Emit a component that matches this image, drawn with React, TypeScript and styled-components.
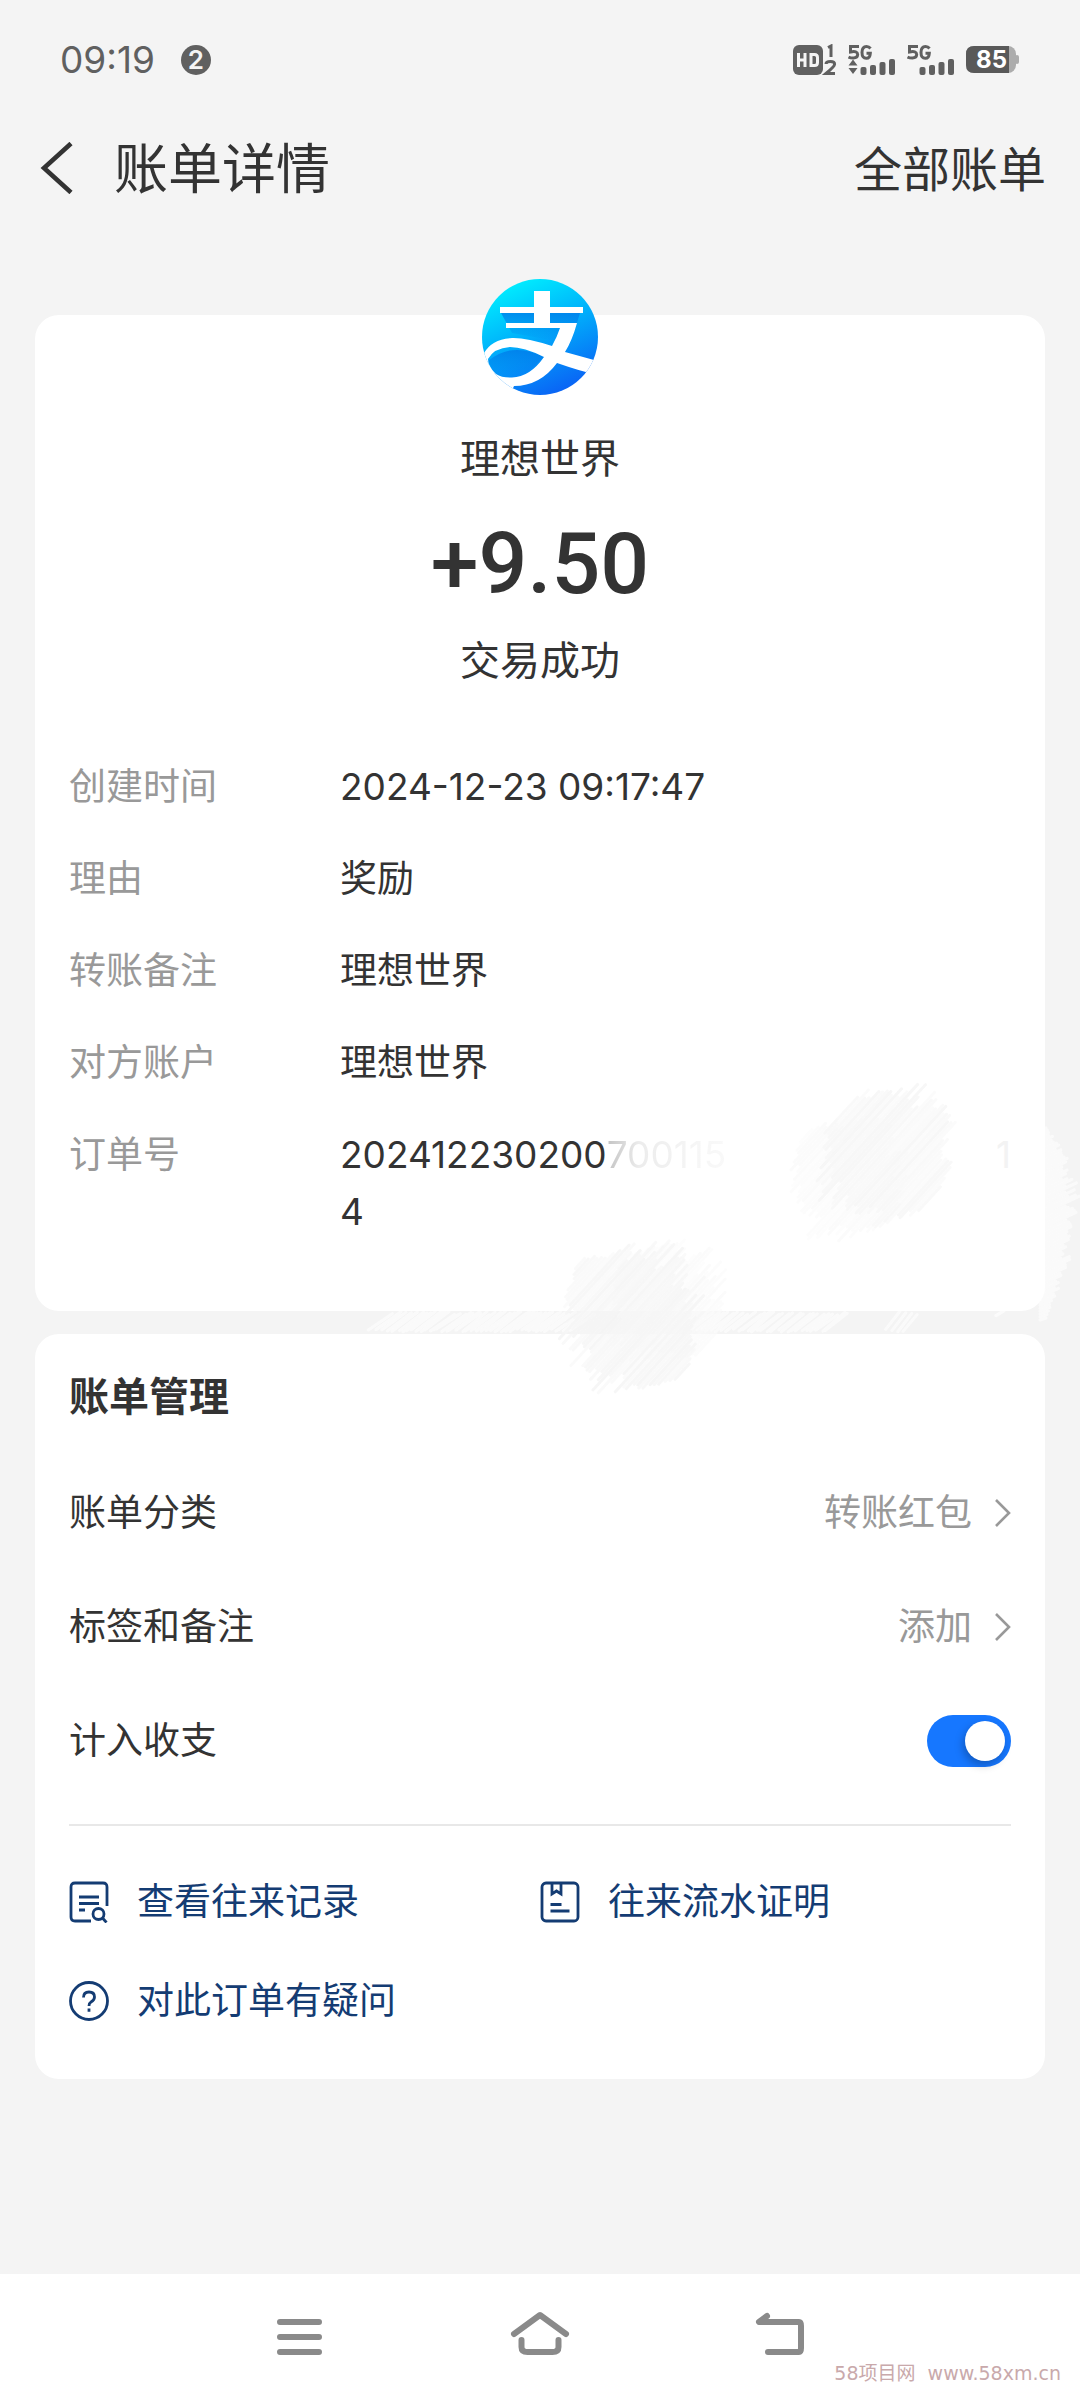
import React, { useState } from "react";
import styled, { createGlobalStyle } from "styled-components";

const ink = "#333333";
const muted = "#999999";
const linkBlue = "#143c73";
const statusGray = "#606060";
const navGray = "#8a8a8a";
const page = "#f4f4f4";

const Global = createGlobalStyle`
  *, *::before, *::after { box-sizing: border-box; }
  body { margin: 0; background: ${page}; }
  h1, h2, p, dl, dt, dd { margin: 0; font-weight: 400; }
  button { font: inherit; color: inherit; border: 0; padding: 0; background: none; cursor: pointer; }
  a { color: inherit; text-decoration: none; }
  svg { display: block; flex: none; }
`;

const Screen = styled.div`
  display: flex;
  flex-direction: column;
  min-height: 100vh;
  background: ${page};
  color: ${ink};
  font-family: Inter, "Noto Sans CJK SC", sans-serif;
`;

const StatusBar = styled.div`
  display: flex;
  align-items: center;
  justify-content: space-between;
  height: 120px;
  padding: 0 60px;
  color: ${statusGray};
`;

const StatusGroup = styled.div<{ $gap: number }>`
  display: flex;
  align-items: center;
  gap: ${(p) => p.$gap}px;
`;

const Clock = styled.span`
  font-size: 37px;
  line-height: 40px;
`;

const CountBadge = styled.span`
  width: 30px;
  height: 30px;
  border-radius: 50%;
  background: ${statusGray};
  color: ${page};
  font-size: 26px;
  font-weight: 600;
  line-height: 30px;
  text-align: center;
`;

const TitleBar = styled.header`
  display: flex;
  align-items: center;
  height: 96px;
  padding: 0 34px 0 40px;
`;

const BackButton = styled.button`
  display: flex;
  width: 74px;
`;

const Title = styled.h1`
  flex: 1;
  padding-top: 4px;
  font-size: 54px;
  line-height: 72px;
`;

const AllBills = styled.a`
  padding-top: 4px;
  font-size: 48px;
  line-height: 72px;
`;

const Content = styled.main`
  position: relative;
  display: flex;
  flex-direction: column;
  gap: 23px;
  flex: 1;
  padding: 99px 35px 0;
`;

const Card = styled.section`
  border-radius: 24px;
  background: #ffffff;
  padding: 0 34px;
`;

const Summary = styled.div`
  display: flex;
  flex-direction: column;
  align-items: center;
  margin-top: -36px;
`;

const SummaryText = styled.p`
  font-size: 40px;
  line-height: 56px;
`;

const Payee = styled(SummaryText)`
  margin-top: 36px;
`;

const Amount = styled.p`
  font-family: Roboto, "Liberation Sans", sans-serif;
  font-size: 86px;
  font-weight: 500;
  line-height: 100px;
  margin: 27px 0 19px;
`;

const Details = styled.dl`
  display: grid;
  grid-template-columns: 271px 1fr;
  row-gap: 35px;
  padding: 69px 0 71px;
  font-size: 37px;
  line-height: 57px;
`;

const DetailLabel = styled.dt`
  color: ${muted};
`;

const DetailValue = styled.dd``;

const OrderLine = styled.span`
  display: flex;
`;

const FadedDigits = styled.span`
  flex: 1;
  color: transparent;
  background: linear-gradient(90deg, #c4c4c4 0, #ececec 32px, #f6f6f6 90px, #fcfcfc 150px);
  background-clip: text;
  -webkit-background-clip: text;
`;

const LastFadedDigit = styled.span`
  color: #f3f3f3;
`;

const Smudges = styled.svg`
  position: absolute;
  left: 0;
  top: 864px;
  width: 100%;
  height: auto;
  pointer-events: none;
`;

const ManageTitle = styled.h2`
  padding: 35px 0 31px;
  font-size: 40px;
  font-weight: 700;
  line-height: 56px;
`;

const SettingRow = styled.div`
  display: flex;
  align-items: center;
  justify-content: space-between;
  height: 114px;
  font-size: 37px;
  line-height: 56px;
`;

const SettingAction = styled.button`
  display: flex;
  align-items: center;
  gap: 23px;
  color: ${muted};
`;

const Switch = styled.input`
  appearance: none;
  position: relative;
  width: 84px;
  height: 52px;
  margin: 0;
  border-radius: 26px;
  background: #cccccc;
  cursor: pointer;

  &::after {
    content: "";
    position: absolute;
    top: 6px;
    left: 6px;
    width: 40px;
    height: 40px;
    border-radius: 50%;
    background: #ffffff;
    box-shadow: -2px 4px 8px rgba(0, 0, 0, 0.25);
  }

  &:checked { background: #1677ff; }
  &:checked::after { left: 38px; }
`;

const Links = styled.nav`
  display: grid;
  grid-template-columns: 1fr 1fr;
  row-gap: 43px;
  margin-top: 26px;
  padding: 48px 0 50px;
  border-top: 2px solid #e8e8e8;
  color: ${linkBlue};
`;

const LinkItem = styled.a`
  display: flex;
  align-items: center;
  gap: 28px;
  font-size: 37px;
  line-height: 56px;
`;

const NavBar = styled.footer`
  position: relative;
  display: flex;
  justify-content: center;
  height: 126px;
  padding-bottom: 4px;
  background: #ffffff;
`;

const NavButton = styled.button`
  display: flex;
  justify-content: center;
  align-items: center;
  width: 240px;
`;

const Watermark = styled.span`
  position: absolute;
  right: 19px;
  bottom: 14px;
  color: #c9a9ab;
  font-family: "DejaVu Sans", "Noto Sans CJK SC", sans-serif;
  font-size: 19px;
  line-height: 26px;
  white-space: pre;
`;

const BackIcon = () => (
  <svg width="34" height="52" viewBox="0 0 34 52" fill="none" stroke={ink} strokeWidth="4.6">
    <path d="M31 1.5 4 26l27 24.500" />
  </svg>
);

const HdIcon = () => (
  <svg width="44" height="32" viewBox="0 0 44 32" fill={statusGray}>
    <rect x="0" y="1" width="30" height="30" rx="6" />
    <path d="M5.500 9v14M12 9v14M5.500 16H12M18 10.500h3.500q3 0 3 3v5q0 3-3 3H18z" fill="none" stroke={page} strokeWidth="3" />
    <path d="M35 3.500 38 2v11M33 20q0-2.500 4.500-2.500t4 3q0 2-8.500 9h9" fill="none" stroke={statusGray} strokeWidth="3" />
  </svg>
);

const SignalIcon = ({ data }: { data?: boolean }) => (
  <svg width="48" height="32" viewBox="0 0 48 32" fill={statusGray}>
    <path d="M11 2.500H2.500V8q7-1.500 7.200 2.500Q9.500 14 5.500 14 2.500 14 .5 13M22.500 4.500Q21 2.500 18.500 2.500q-4.500 0-4.500 6T18.500 14.300q3.500 0 3.800-5H18.500" fill="none" stroke={statusGray} strokeWidth="3" />
    {data && <path d="M5 15.500l4.500 6h-9zM5 30l4.500-6h-9z" />}
    <rect x="12.500" y="23" width="6" height="8" rx="2" />
    <rect x="22" y="21" width="6" height="10" rx="2" />
    <rect x="31.500" y="18" width="6" height="13" rx="2" />
    <rect x="41" y="15" width="6" height="16" rx="2" />
  </svg>
);

const BatteryWrap = styled.span`
  position: relative;
  display: flex;
  align-items: center;
`;

const BatteryLevel = styled.span`
  position: absolute;
  inset: 0 3px 0 0;
  color: #ffffff;
  font-size: 24px;
  font-weight: 700;
  line-height: 28px;
  text-align: center;
`;

const BatteryIcon = () => (
  <svg width="54" height="28" viewBox="0 0 54 28">
    <rect x="0" y="0" width="50" height="27" rx="8" fill="#acacac" />
    <rect x="49" y="9" width="4" height="9" rx="2" fill="#acacac" />
    <path d="M8 0h35v27H8q-8 0-8-8V8q0-8 8-8z" fill="#595959" />
  </svg>
);

const PayLogo = () => (
  <svg width="116" height="116" viewBox="0 0 116 116" role="img" aria-label="支付宝">
    <defs>
      <linearGradient id="pay" x1="0.2" y1="0" x2="0.65" y2="1">
        <stop offset="0" stopColor="#00f4ff" />
        <stop offset="0.45" stopColor="#00b4fb" />
        <stop offset="1" stopColor="#0a62f5" />
      </linearGradient>
      <linearGradient id="shade" x1="0" y1="0" x2="0" y2="1">
        <stop offset="0" stopColor="#0078e8" stopOpacity="0.75" />
        <stop offset="1" stopColor="#0078e8" stopOpacity="0" />
      </linearGradient>
      <clipPath id="disc"><circle cx="58" cy="58" r="58" /></clipPath>
    </defs>
    <g clipPath="url(#disc)">
      <rect width="116" height="116" fill="url(#pay)" />
      <path d="M19 34H98L90 60 74 62 30 54z" fill="url(#shade)" />
      <path d="M6 82Q30 62 62 78L42 96 14 98z" fill="url(#shade)" />
      <path d="M52 12h16v16h33v6H68v10h27Q90 62 83 73 L112 81V95Q98 92 75 84 58 107 32 107L28 116H-6V74H2Q10 60 30 59 44 58.500 70 67 75 58 78 49H24v-5h28V34H18v-6h34z M28 68Q12 69 6 80 6 88 14 95 20 99 30 98.500 48 98 62 78 42 68 28 68z" fill="#ffffff" fillRule="evenodd" />
    </g>
  </svg>
);

const ChevronIcon = () => (
  <svg width="16" height="28" viewBox="0 0 16 28" fill="none" stroke={muted} strokeWidth="2.600">
    <path d="M1 1l13 13L1 27" />
  </svg>
);

const RecordIcon = () => (
  <svg width="40" height="42" viewBox="0 0 40 42" fill="none" stroke={linkBlue} strokeWidth="2.800">
    <path d="M38 25V6q0-4-4-4H6Q2 2 2 6v30q0 4 4 4h16M10 16h20M10 22.500h20M10 29h6" />
    <circle cx="29.500" cy="33" r="5.500" />
    <path d="M33.500 37l4 4.500" />
  </svg>
);

const CertificateIcon = () => (
  <svg width="40" height="42" viewBox="0 0 40 42" fill="none" stroke={linkBlue} strokeWidth="2.800">
    <rect x="2" y="2" width="36" height="38" rx="4" />
    <path d="M12 2v11l4.500-3 4.500 3V2M10.500 23.500h11M10.500 30h19" />
  </svg>
);

const QuestionIcon = () => (
  <svg width="40" height="42" viewBox="0 0 40 42" fill="none" stroke={linkBlue} strokeWidth="2.800">
    <circle cx="20" cy="21" r="18.500" />
    <path d="M14.500 17.500q0-5.500 5.500-5.500t5.500 5q0 3-3.500 5-2 1.200-2 4M20 28.500v3.200" />
  </svg>
);

const MenuIcon = () => (
  <svg width="60" height="48" viewBox="0 0 60 48" stroke={navGray} strokeWidth="6" strokeLinecap="round">
    <path d="M10 11h39M10 26h39M10 41h39" />
  </svg>
);

const HomeIcon = () => (
  <svg width="60" height="48" viewBox="0 0 60 48" fill="none" stroke={navGray} strokeWidth="6" strokeLinecap="round" strokeLinejoin="round">
    <path d="M4 23L30 4l26 19M11.500 29v7q0 5 6 5h25q6 0 6-5v-7" />
  </svg>
);

const ReturnIcon = () => (
  <svg width="60" height="48" viewBox="0 0 60 48" fill="none" stroke={navGray} strokeWidth="6" strokeLinecap="round" strokeLinejoin="round">
    <path d="M17 5L9 11h40q2 0 2 4v22q0 4-2 4H18" />
  </svg>
);

// Deterministic pseudo-random value, so the brush marks are the same on every render.
const noise = (n: number) => {
  const v = Math.sin(n * 127.1 + 11.7) * 43758.5453;
  return v - Math.floor(v);
};

type BrushProps = { cx: number; cy: number; size: number; seed: number; from: number; to: number; color: string };

// A patch of 45-degree hatching whose stroke ends are ragged.
const Brush = ({ cx, cy, size, seed, from, to, color }: BrushProps) => {
  const steps = Math.round((to - from) / 3);
  return (
    <g stroke={color} strokeWidth="3" strokeLinecap="round">
      {Array.from({ length: steps }, (_, i) => {
        const across = from + i * 3;
        const edge = Math.max(0, 1 - Math.pow(Math.abs(across) / size, 2));
        const a = size * edge * (0.65 + noise(seed + i) * 0.5);
        const b = size * edge * (0.65 + noise(seed + i + 50) * 0.5);
        const ox = cx + across * 0.7;
        const oy = cy + across * 0.7;
        return (
          <line key={i} x1={ox - a * 0.66} y1={oy + a * 0.72} x2={ox + b * 0.66} y2={oy - b * 0.72} opacity={0.4 + noise(seed + i + 90) * 0.6} />
        );
      })}
    </g>
  );
};

type SweepProps = { x1: number; x2: number; y1: number; y2: number; step: number; slant: number; seed: number; opacity: number };

const Sweep = ({ x1, x2, y1, y2, step, slant, seed, opacity }: SweepProps) => (
  <g stroke="#ffffff" strokeWidth="3" strokeLinecap="round" opacity={opacity}>
    {Array.from({ length: Math.round((x2 - x1) / step) }, (_, i) => {
      const x = x1 + i * step + noise(seed + i) * 4;
      return <line key={i} x1={x} y1={y2 - noise(seed + i + 9) * 3} x2={x + slant} y2={y1 + noise(seed + i + 30) * 4} />;
    })}
  </g>
);

// White marks that stick out of the card into the right margin.
const marginMarks = Array.from({ length: 66 }, (_, i) => {
  const t = i / 65;
  const y = 50 + t * 190;
  const reach = 4 + Math.sin(t * Math.PI) * 34 * (0.5 + noise(i) * 0.5);
  return { y, reach };
});

const SmudgeLayer = () => (
  <Smudges viewBox="0 0 1080 340" aria-hidden="true">
    <g stroke="#ffffff" strokeWidth="3" strokeLinecap="round" opacity="0.6">
      {marginMarks.map((m, i) => (
        <line key={i} x1={1040} y1={m.y} x2={1042 + m.reach} y2={m.y - m.reach * 0.5} />
      ))}
    </g>
    <Sweep x1={368} x2={570} y1={231} y2={252} step={4} slant={24} seed={3} opacity={0.6} />
    <Sweep x1={690} x2={830} y1={231} y2={252} step={5} slant={22} seed={40} opacity={0.6} />
    <Sweep x1={884} x2={908} y1={231} y2={252} step={6} slant={14} seed={70} opacity={0.6} />
    <Sweep x1={994} x2={1000} y1={230} y2={238} step={5} slant={8} seed={80} opacity={0.7} />
    <Brush cx={848} cy={98} size={66} seed={25} from={-60} to={60} color="#fbfbfb" />
    <Brush cx={886} cy={74} size={76} seed={15} from={-60} to={66} color="#f7f7f7" />
    <Brush cx={666} cy={224} size={66} seed={35} from={-60} to={60} color="#fbfbfb" />
    <Brush cx={632} cy={238} size={80} seed={45} from={-76} to={76} color="#f6f6f6" />
  </Smudges>
);

const settings = [
  { label: "账单分类", value: "转账红包" },
  { label: "标签和备注", value: "添加" },
];

const details = [
  { label: "创建时间", value: "2024-12-23 09:17:47" },
  { label: "理由", value: "奖励" },
  { label: "转账备注", value: "理想世界" },
  { label: "对方账户", value: "理想世界" },
];

const links = [
  { text: "查看往来记录", Icon: RecordIcon },
  { text: "往来流水证明", Icon: CertificateIcon },
  { text: "对此订单有疑问", Icon: QuestionIcon },
];

export default function App() {
  const [counted, setCounted] = useState(true);

  return (
    <Screen>
      <Global />
      <StatusBar>
        <StatusGroup $gap={26}>
          <Clock>09:19</Clock>
          <CountBadge>2</CountBadge>
        </StatusGroup>
        <StatusGroup $gap={11}>
          <HdIcon />
          <SignalIcon data />
          <SignalIcon />
          <BatteryWrap>
            <BatteryIcon />
            <BatteryLevel>85</BatteryLevel>
          </BatteryWrap>
        </StatusGroup>
      </StatusBar>

      <TitleBar>
        <BackButton aria-label="返回">
          <BackIcon />
        </BackButton>
        <Title>账单详情</Title>
        <AllBills href="#all">全部账单</AllBills>
      </TitleBar>

      <Content>
        <Card>
          <Summary>
            <PayLogo />
            <Payee>理想世界</Payee>
            <Amount>+9.50</Amount>
            <SummaryText>交易成功</SummaryText>
          </Summary>
          <Details>
            {details.map((d) => (
              <React.Fragment key={d.label}>
                <DetailLabel>{d.label}</DetailLabel>
                <DetailValue>{d.value}</DetailValue>
              </React.Fragment>
            ))}
            <DetailLabel>订单号</DetailLabel>
            <DetailValue>
              <OrderLine>
                202412230200
                <FadedDigits>700115</FadedDigits>
                <LastFadedDigit>1</LastFadedDigit>
              </OrderLine>
              4
            </DetailValue>
          </Details>
        </Card>

        <Card>
          <ManageTitle>账单管理</ManageTitle>
          {settings.map((s) => (
            <SettingRow key={s.label}>
              <span>{s.label}</span>
              <SettingAction aria-label={`${s.label} ${s.value}`}>
                {s.value}
                <ChevronIcon />
              </SettingAction>
            </SettingRow>
          ))}
          <SettingRow>
            <label htmlFor="counted">计入收支</label>
            <Switch id="counted" type="checkbox" checked={counted} onChange={(e) => setCounted(e.target.checked)} />
          </SettingRow>
          <Links>
            {links.map(({ text, Icon }) => (
              <LinkItem key={text} href="#more">
                <Icon />
                {text}
              </LinkItem>
            ))}
          </Links>
        </Card>
        <SmudgeLayer />
      </Content>

      <NavBar>
        <NavButton aria-label="菜单"><MenuIcon /></NavButton>
        <NavButton aria-label="主页"><HomeIcon /></NavButton>
        <NavButton aria-label="后退"><ReturnIcon /></NavButton>
        <Watermark>{"58项目网  www.58xm.cn"}</Watermark>
      </NavBar>
    </Screen>
  );
}
